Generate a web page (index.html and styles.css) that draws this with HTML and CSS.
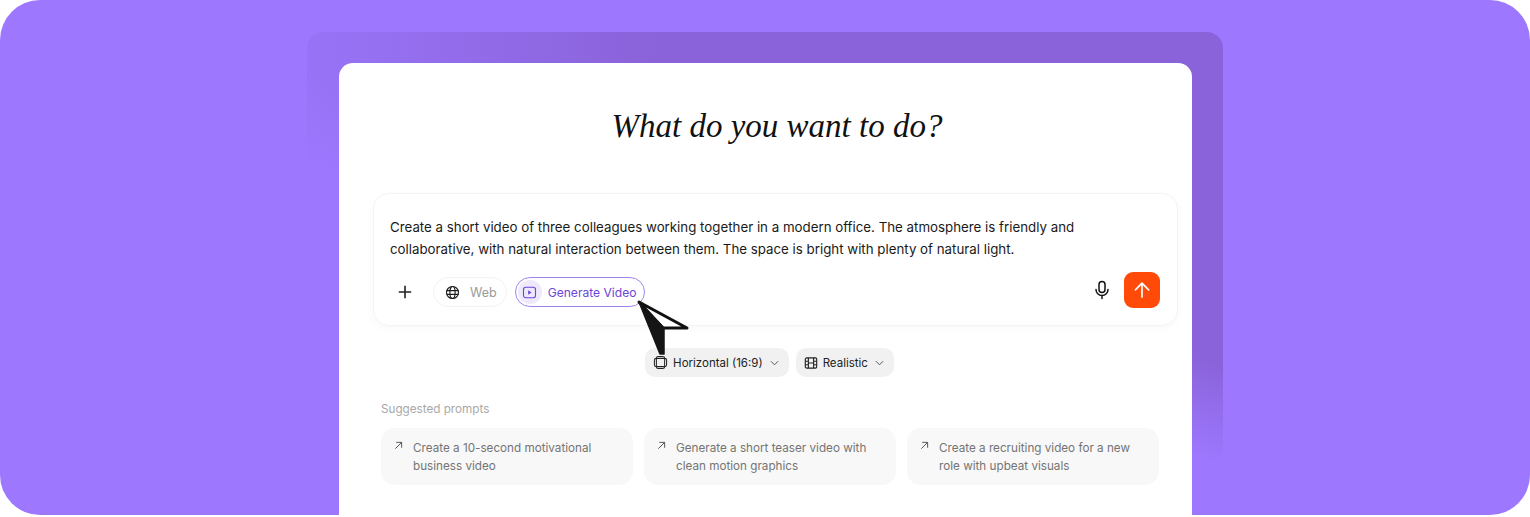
FILE: index.html
```html
<!DOCTYPE html>
<html lang="en">
<head>
<meta charset="utf-8">
<title>What do you want to do?</title>
<link rel="stylesheet" href="styles.css">
</head>
<body>
<main class="stage">
  <div class="backdrop">
    <section class="card">
      <h1 class="title">What do you want to do?</h1>
      <div class="composer">
        <p class="prompt">Create a short video of three colleagues working together in a modern office. The atmosphere is friendly and collaborative, with natural interaction between them. The space is bright with plenty of natural light.</p>
        <div class="toolbar">
          <svg class="plus" viewBox="0 0 14 14" width="14" height="14"><path d="M7 .8v12.4M.8 7h12.4" fill="none" stroke="#222" stroke-width="1.6"/></svg>
          <span class="chip chip-web">
            <svg viewBox="0 0 16 16" width="15" height="15"><g fill="none" stroke="#1c1c1c" stroke-width="1.2"><circle cx="8" cy="8" r="6.4"/><ellipse cx="8" cy="8" rx="2.8" ry="6.4"/><path d="M1.8 6h12.400M1.800 10h12.400"/></g></svg>
            Web
          </span>
          <span class="chip chip-video">
            <span class="chip-icon"><svg viewBox="0 0 16 16" width="15" height="15"><rect x="1.6" y="2.4" width="12.8" height="11.2" rx="2.4" fill="none" stroke="#6c46d9" stroke-width="1.2"/><path d="M6.600 5.700l3.600 2.300-3.600 2.300z" fill="#6c46d9"/></svg></span>
            Generate Video
          </span>
          <span class="spacer"></span>
          <svg class="mic" viewBox="0 0 16 20" width="16" height="20"><g fill="none" stroke="#111" stroke-width="1.5" stroke-linecap="round"><rect x="5" y="1.500" width="6" height="11" rx="3"/><path d="M2 9.500a6 6 0 0 0 12 0M8 15.500v3"/></g></svg>
          <button class="send" type="button" aria-label="Send"><svg viewBox="0 0 18 18" width="18" height="18"><path d="M9 16V2.200M2.400 8.800L9 2.200l6.600 6.600" fill="none" stroke="#fff" stroke-width="1.7" stroke-linecap="round" stroke-linejoin="round"/></svg></button>
        </div>
      </div>
      <div class="options">
        <span class="option">
          <svg viewBox="0 0 16 16" width="15" height="15"><g fill="none" stroke="#222" stroke-width="1.100"><rect x="1.500" y="3.600" width="13" height="8.800" rx="2"/><rect x="3.600" y="1.500" width="8.800" height="13" rx="2"/></g></svg>
          Horizontal (16:9)
          <svg class="caret" viewBox="0 0 10 6" width="9" height="6"><path d="M1 1l4 4 4-4" fill="none" stroke="#555" stroke-width="1.100"/></svg>
        </span>
        <span class="option">
          <svg viewBox="0 0 16 16" width="14" height="14"><g fill="none" stroke="#222" stroke-width="1.300"><rect x="1.500" y="2.200" width="13" height="11.600" rx="1.600"/><path d="M5 2.200v11.600M11 2.200v11.600M1.500 6h3.500M1.500 10h3.500M11 6h3.500M11 10h3.500M5 8h6"/></g></svg>
          Realistic
          <svg class="caret" viewBox="0 0 10 6" width="9" height="6"><path d="M1 1l4 4 4-4" fill="none" stroke="#555" stroke-width="1.100"/></svg>
        </span>
      </div>
      <h2 class="suggest-label">Suggested prompts</h2>
      <div class="suggestions">
        <div class="suggestion"><svg viewBox="0 0 10 10" width="9" height="9"><path d="M1.500 8.500L8.500 1.500M2.500 1.500h6v6" fill="none" stroke="#555" stroke-width="1.100"/></svg><span>Create a 10-second motivational business video</span></div>
        <div class="suggestion"><svg viewBox="0 0 10 10" width="9" height="9"><path d="M1.500 8.500L8.500 1.500M2.500 1.500h6v6" fill="none" stroke="#555" stroke-width="1.100"/></svg><span>Generate a short teaser video with clean motion graphics</span></div>
        <div class="suggestion"><svg viewBox="0 0 10 10" width="9" height="9"><path d="M1.500 8.500L8.500 1.500M2.500 1.500h6v6" fill="none" stroke="#555" stroke-width="1.100"/></svg><span>Create a recruiting video for a new role with upbeat visuals</span></div>
      </div>
    </section>
  </div>
  <svg class="cursor" viewBox="0 0 54 58" width="54" height="58"><path d="M2 3L26 29L50 29Z" fill="#fff" stroke="#111" stroke-width="3" stroke-linejoin="round"/><path d="M2 3L23 55H27V29Z" fill="#151515" stroke="#151515" stroke-width="1.500" stroke-linejoin="round"/></svg>
</main>
</body>
</html>
```
FILE: styles.css
```css
* { box-sizing: border-box; }
html, body { margin: 0; padding: 0; background: #fff; }
body { width: 1530px; height: 517px; overflow: hidden; font-family: "Inter", "Liberation Sans", sans-serif; }
.stage {
  position: relative;
  width: 1530px;
  height: 515px;
  overflow: hidden;
  background: #9d78ff;
  border-radius: 40px;
  padding: 32px 0 0 307px;
}
.backdrop {
  width: 916px;
  height: 483px;
  padding: 31px 31px 0 32px;
  border-radius: 16px 16px 0 0;
  background:
    linear-gradient(197.7deg, rgba(157,120,255,0) 43%, #9d78ff 56%),
    linear-gradient(90deg, #9873f6 0%, #8a63da 38%, #8a63da 100%);
}
.card {
  height: 452px;
  background: #fff;
  border-radius: 14px 14px 0 0;
  padding: 35px 14px 0 34px;
}
.title {
  margin: 0;
  height: 56px;
  padding-left: 3px;
  font: italic 400 33px/56px "Liberation Serif", serif;
  color: #111;
  text-align: center;
}
.composer {
  margin-top: 39px;
  height: 133px;
  border: 1px solid #f4f4f4;
  border-radius: 16px;
  box-shadow: 0 2px 8px rgba(0,0,0,.03);
  padding: 22px 17px 0 16px;
}
.prompt {
  max-width: 720px;
  margin: 0;
  font-size: 13.3px;
  line-height: 22px;
  color: #1a1a1a;
}
.toolbar { display: flex; align-items: center; margin-top: 12px; height: 40px; padding-left: 8px; }
.plus { flex: none; }
.chip { display: flex; align-items: center; height: 30px; border-radius: 15px; }
.chip-web { margin-left: 21px; padding: 0 9px 0 11px; gap: 10px; font-size: 12.5px; color: #9a9a9a; border: 1px solid #f3f3f3; }
.chip-video { margin-left: 8px; padding: 0 7px 0 2px; gap: 6px; font-size: 12.1px; color: #6c46d9; border: 1px solid #9f85ea; }
.chip-icon { display: flex; align-items: center; justify-content: center; width: 24px; height: 24px; border-radius: 50%; background: #efe9fc; }
.spacer { flex: 1; }
.mic { margin: 0 14px 4px 0; }
.send { display: flex; align-items: center; justify-content: center; width: 36px; height: 36px; margin-bottom: 4px; padding: 0; border: 0; border-radius: 9px; background: #ff4a0a; }
.options { display: flex; justify-content: center; gap: 7px; margin-top: 22px; padding-right: 12px; }
.option { display: flex; align-items: center; gap: 5px; height: 29px; padding: 0 10px 0 8px; border-radius: 10px; background: #f1f1f1; font-size: 11.5px; color: #222; }
.caret { margin-left: 2px; }
.suggest-label { margin: 24px 0 0 8px; font-size: 11.7px; font-weight: 400; line-height: 16px; color: #a8a8a8; }
.suggestions { display: flex; gap: 11px; margin: 11px 0 0 8px; }
.suggestion { display: flex; gap: 10px; width: 252px; height: 57px; padding: 11px 12px 0 13px; border-radius: 14px; background: #f8f8f8; font-size: 11.7px; line-height: 18px; color: #747474; }
.suggestion svg { flex: none; margin-top: 2px; }
.cursor { position: absolute; left: 637px; top: 299px; }
```
